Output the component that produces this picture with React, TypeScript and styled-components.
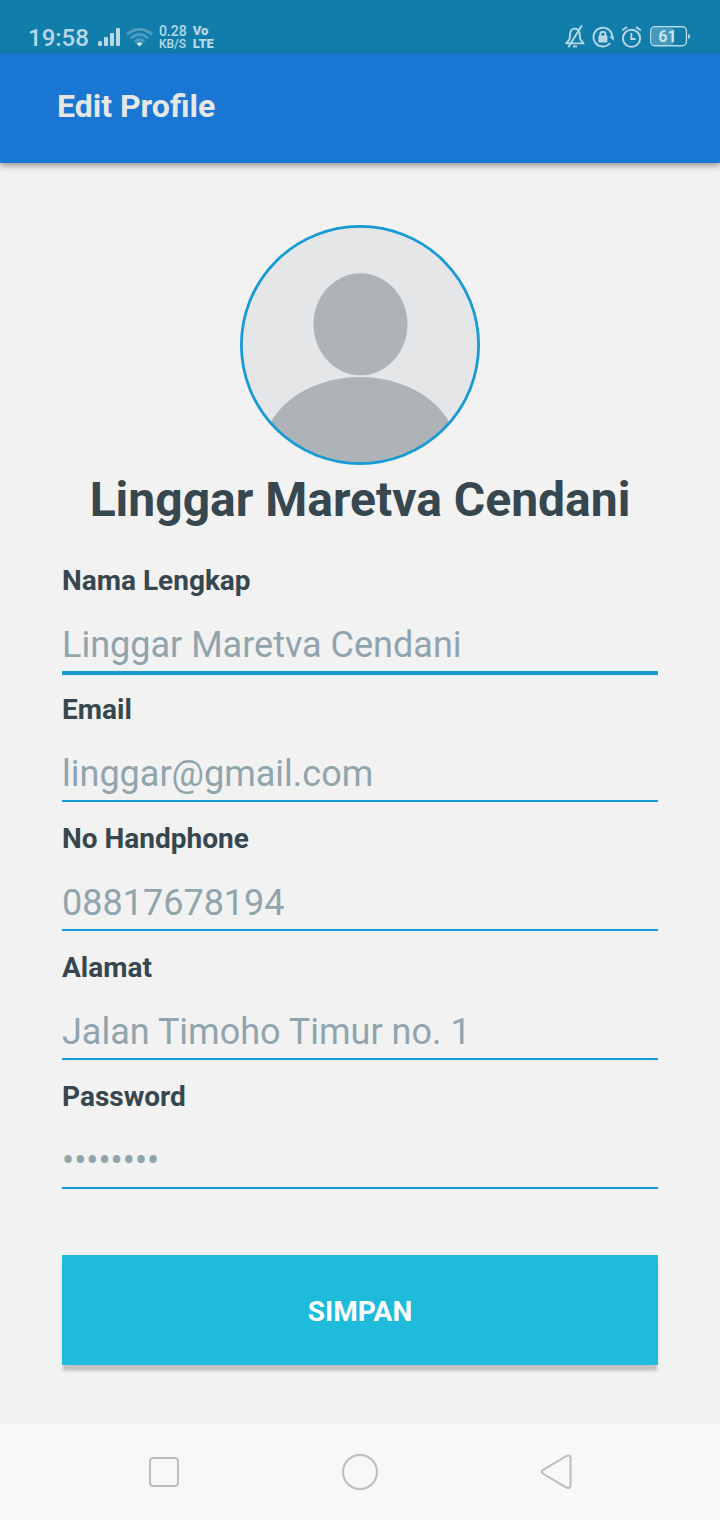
import React from 'react';
import styled, { createGlobalStyle } from 'styled-components';

const GlobalStyle = createGlobalStyle`
  *, *::before, *::after { box-sizing: border-box; }
  body {
    margin: 0;
    background: #f2f2f2;
    font-family: Roboto, "Liberation Sans", sans-serif;
  }
`;

const Screen = styled.div`
  display: flex;
  flex-direction: column;
  min-height: 100vh;
`;

const StatusBar = styled.div`
  display: flex;
  align-items: flex-start;
  justify-content: space-between;
  height: 53px;
  padding: 0 29px 0 28px;
  background: #117dab;
  color: #b8d8e6;
`;

const StatusGroup = styled.div<{ $gap: number; $top: number }>`
  display: flex;
  align-items: center;
  gap: ${({ $gap }) => $gap}px;
  padding-top: ${({ $top }) => $top}px;
  svg { display: block; flex: none; }
`;

const Clock = styled.time`
  font-size: 24px;
  font-weight: 500;
  line-height: 32px;
  padding-top: 1px;
  margin-right: 3px;
`;

const Stack = styled.div`
  display: flex;
  flex-direction: column;
  font-weight: 500;
  line-height: 13px;
`;

const Speed = styled.span`
  font-size: 14px;
`;

const Unit = styled.span`
  font-size: 12px;
`;

const NetworkStack = styled(Stack)`
  padding-bottom: 2px;
  font-size: 13px;
  font-weight: 900;
`;

const Header = styled.header`
  display: flex;
  align-items: center;
  height: 110px;
  padding: 0 57px 4px;
  background: #1976d3;
  box-shadow: 0 3px 6px rgba(0, 0, 0, 0.36);
`;

const Title = styled.h1`
  margin: 0;
  font-size: 32px;
  line-height: 40px;
  font-weight: 700;
  color: #e6e6e6;
`;

const Main = styled.main`
  flex: 1;
  display: flex;
  flex-direction: column;
  align-items: stretch;
  padding: 62px 62px 58px;
`;

const Avatar = styled.svg`
  display: block;
  align-self: center;
  width: 240px;
  height: 240px;
`;

const Name = styled.h2`
  margin: 0 -20px;
  padding-top: 5px;
  font-size: 48px;
  line-height: 60px;
  font-weight: 700;
  text-align: center;
  color: #37474f;
`;

const Form = styled.form`
  display: flex;
  flex-direction: column;
  padding-top: 14px;
`;

const Field = styled.div<{ $active?: boolean }>`
  display: flex;
  flex-direction: column;
  height: 129px;
  padding-top: 21px;
  border-bottom: 2px solid #189ad6;
  box-shadow: ${({ $active }) => ($active ? '0 2px 0 #189ad6' : 'none')};
`;

const Label = styled.label`
  font-size: 28px;
  line-height: 32px;
  font-weight: 700;
  color: #37474f;
`;

const TextInput = styled.input`
  width: 100%;
  height: 48px;
  margin: 24px 0 0;
  padding: 0;
  border: 0;
  outline: 0;
  background: transparent;
  font-family: inherit;
  font-size: 36px;
  line-height: 48px;
  color: #90a4ae;
`;

const SaveButton = styled.button`
  height: 110px;
  margin-top: 66px;
  padding: 2px 0 0;
  border: 0;
  background: #1fbbda;
  box-shadow: 0 7px 3px -1px rgba(0, 0, 0, 0.2);
  color: #ffffff;
  font-family: inherit;
  font-size: 28px;
  font-weight: 700;
`;

const NavBar = styled.nav`
  display: flex;
  align-items: center;
  justify-content: space-between;
  height: 96px;
  padding: 0 140px;
  background: #f8f8f8;
`;

const NavButton = styled.button`
  display: block;
  width: 48px;
  height: 48px;
  padding: 0;
  border: 0;
  background: transparent;
  svg { display: block; fill: none; stroke: #bdbdbd; stroke-width: 2; }
`;

const fields = [
  { id: 'name', label: 'Nama Lengkap', type: 'text', value: 'Linggar Maretva Cendani', active: true },
  { id: 'email', label: 'Email', type: 'email', value: 'linggar@gmail.com' },
  { id: 'phone', label: 'No Handphone', type: 'tel', value: '08817678194' },
  { id: 'address', label: 'Alamat', type: 'text', value: 'Jalan Timoho Timur no. 1' },
  { id: 'password', label: 'Password', type: 'password', value: 'password' },
];

const Signal = () => (
  <svg width="22" height="20" viewBox="0 0 22 20" fill="currentColor" aria-hidden="true">
    <rect x="0" y="13" width="4" height="5" rx="1.5" />
    <rect x="6" y="9" width="4" height="9" rx="1" />
    <rect x="12" y="5" width="4" height="13" rx="1" />
    <rect x="18" y="0" width="4" height="18" rx="1" />
  </svg>
);

const Wifi = () => (
  <svg width="27" height="20" viewBox="0 1 27 20" fill="none" stroke="#4c9dc0" strokeWidth="2.8" aria-hidden="true">
    <path d="M1 7.4Q13.5 -2.8 26 7.4" />
    <path d="M5 11.2Q13.5 3.8 22 11.2" />
    <path d="M8.6 14.8Q13.5 10.6 18.4 14.8" />
    <path d="M10.4 16.4Q13.5 14.2 16.6 16.4L13.5 19.4Z" fill="#d5e9f1" stroke="none" />
  </svg>
);

const BellOff = () => (
  <svg width="20" height="24" viewBox="0 0 20 24" fill="none" stroke="currentColor" strokeWidth="1.9" aria-hidden="true">
    <path d="M1.2 18.4H18.6L15.4 14.6L14.4 7.5C13.8 4.6 12 3.6 10 3.6S6 4.6 5.4 7.5L4.4 14.6Z" strokeLinejoin="round" />
    <path d="M8 21.4H12" />
    <path d="M16.8 0.6L3.4 22.2" />
  </svg>
);

const RotationLock = () => (
  <svg width="22" height="22" viewBox="0 0 22 22" fill="none" stroke="currentColor" strokeWidth="1.9" aria-hidden="true">
    <path d="M18.2 17A9.4 9.4 0 1 1 20.3 11.6" />
    <path d="M17 10.6H21.8V14.8Z" fill="currentColor" stroke="none" />
    <rect x="6.4" y="9.6" width="9" height="6.8" rx="1" fill="currentColor" stroke="none" />
    <path d="M8.3 10V8.3A2.6 2.6 0 0 1 13.5 8.3V10" />
  </svg>
);

const Alarm = () => (
  <svg width="21" height="24" viewBox="0 0 21 24" fill="none" stroke="currentColor" strokeWidth="1.9" aria-hidden="true">
    <circle cx="10.5" cy="13.3" r="8.6" />
    <path d="M10.3 8V14H14.5" />
    <path d="M1.2 5.2L6 2M19.8 5.2L15 2" />
  </svg>
);

const Battery = () => (
  <svg width="42" height="22" viewBox="-1 0 42 22" role="img" aria-label="61">
    <rect x="2" y="2" width="22" height="17" rx="3" fill="#4699bd" />
    <rect x="0.8" y="0.8" width="35.6" height="19" rx="4" fill="none" stroke="currentColor" strokeWidth="1.4" />
    <rect x="38" y="8.5" width="1.8" height="4" fill="currentColor" />
    <text x="17.5" y="16" fontSize="16" fontWeight="700" textAnchor="middle" fill="#c9e2ec">61</text>
  </svg>
);

export default function App() {
  return (
    <Screen>
      <GlobalStyle />
      <StatusBar>
        <StatusGroup $gap={6} $top={21}>
          <Clock>19:58</Clock>
          <Signal />
          <Wifi />
          <Stack>
            <Speed>0.28</Speed>
            <Unit>KB/S</Unit>
          </Stack>
          <NetworkStack>
            <span>Vo</span>
            <span>LTE</span>
          </NetworkStack>
        </StatusGroup>
        <StatusGroup $gap={7} $top={25}>
          <BellOff />
          <RotationLock />
          <Alarm />
          <Battery />
        </StatusGroup>
      </StatusBar>
      <Header>
        <Title>Edit Profile</Title>
      </Header>
      <Main>
        <Avatar viewBox="0 0 240 240" role="img" aria-label="Linggar Maretva Cendani">
          <defs>
            <clipPath id="avatar-clip">
              <circle cx="120" cy="120" r="119" />
            </clipPath>
          </defs>
          <g clipPath="url(#avatar-clip)">
            <rect width="240" height="240" fill="#e4e6e8" />
            <ellipse cx="120.5" cy="99.3" rx="47" ry="51" fill="#aeb3b7" />
            <ellipse cx="120" cy="226" rx="97" ry="74" fill="#aeb3b7" />
          </g>
          <circle cx="120" cy="120" r="118.6" fill="none" stroke="#189ad6" strokeWidth="2.8" />
        </Avatar>
        <Name>Linggar Maretva Cendani</Name>
        <Form onSubmit={(e) => e.preventDefault()}>
          {fields.map((f) => (
            <Field key={f.id} $active={f.active}>
              <Label htmlFor={f.id}>{f.label}</Label>
              <TextInput id={f.id} type={f.type} defaultValue={f.value} autoComplete="off" spellCheck={false} />
            </Field>
          ))}
          <SaveButton type="submit">SIMPAN</SaveButton>
        </Form>
      </Main>
      <NavBar>
        <NavButton aria-label="Recent apps">
          <svg width="48" height="48" viewBox="0 0 48 48">
            <rect x="10" y="10" width="28" height="28" rx="3" />
          </svg>
        </NavButton>
        <NavButton aria-label="Home">
          <svg width="48" height="48" viewBox="0 0 48 48">
            <circle cx="24" cy="24" r="17" />
          </svg>
        </NavButton>
        <NavButton aria-label="Back">
          <svg width="48" height="48" viewBox="0 0 48 48">
            <path d="M34.5 8L11.5 21.6Q8 23.8 11.5 26L34.5 39.5Q38.5 41 38.5 37.5V10Q38.5 6.5 34.5 8Z" />
          </svg>
        </NavButton>
      </NavBar>
    </Screen>
  );
}
